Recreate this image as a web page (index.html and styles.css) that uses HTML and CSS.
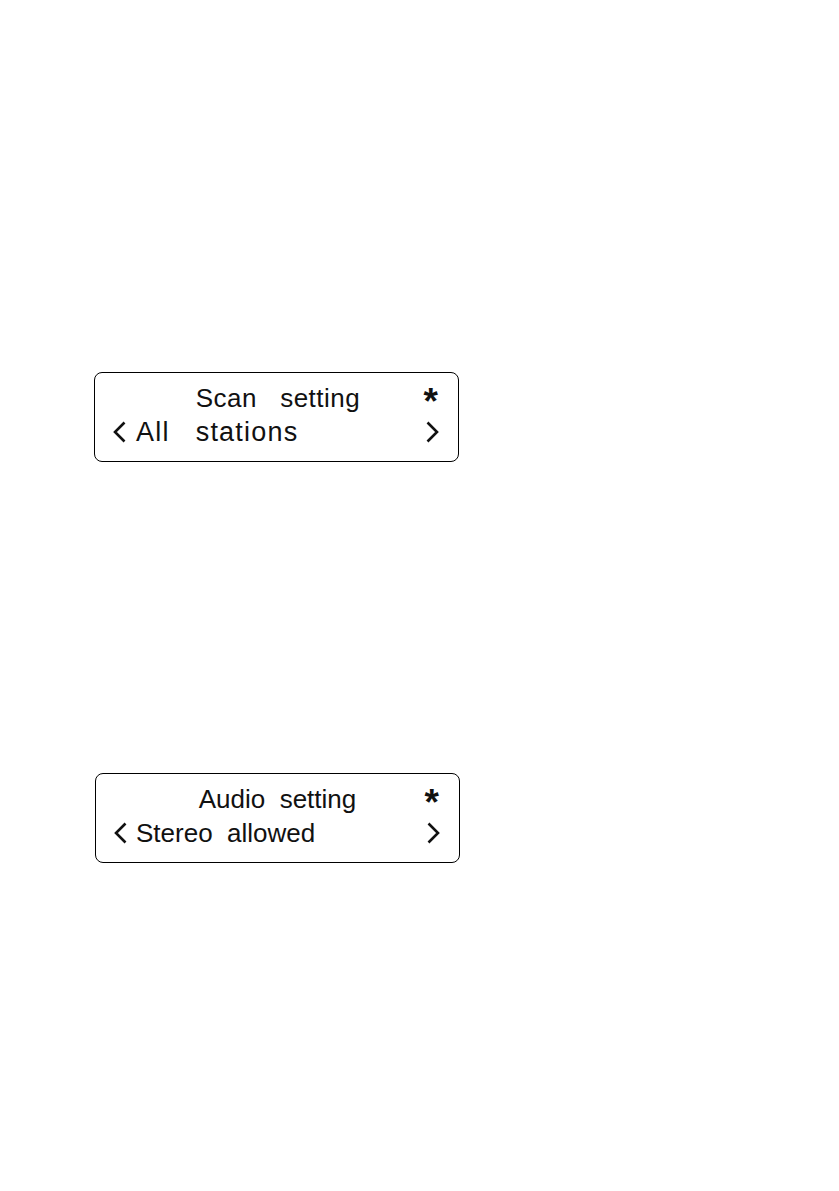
FILE: index.html
```html
<!DOCTYPE html>
<html>
<head>
  <title>Settings display</title>
  <link rel="stylesheet" href="styles.css">
</head>
<body>
  <div class="page">
    <div class="lcd">
      <div class="lcd-title">
        <span></span>
        <span class="title-text wide">Scan   setting</span>
        <span class="star">*</span>
      </div>
      <div class="lcd-option">
        <svg class="chev" viewBox="0 0 13 22"><path d="M11.5 1.5 L2 11 L11.5 20.5"/></svg>
        <span class="option-text wide">All   stations</span>
        <svg class="chev" viewBox="0 0 13 22"><path d="M1.5 1.5 L11 11 L1.5 20.5"/></svg>
      </div>
    </div>

    <div class="lcd second">
      <div class="lcd-title">
        <span></span>
        <span class="title-text">Audio  setting</span>
        <span class="star">*</span>
      </div>
      <div class="lcd-option">
        <svg class="chev" viewBox="0 0 13 22"><path d="M11.5 1.5 L2 11 L11.5 20.5"/></svg>
        <span class="option-text">Stereo  allowed</span>
        <svg class="chev" viewBox="0 0 13 22"><path d="M1.5 1.5 L11 11 L1.5 20.5"/></svg>
      </div>
    </div>
  </div>
</body>
</html>
```

FILE: styles.css
```css
body {
  margin: 0;
  background: #fff;
  font-family: "Liberation Sans", Arial, sans-serif;
  color: #111;
}

.page {
  padding: 372px 0 0 94px;
  display: flex;
  flex-direction: column;
  gap: 311px;
}

.lcd {
  width: 365px;
  box-sizing: border-box;
  border: 1px solid #000;
  border-radius: 8px;
  padding: 6px 18px 14px 18px;
  display: flex;
  flex-direction: column;
  gap: 8px;
}

.second {
  margin-left: 1px;
}

.lcd-title {
  display: grid;
  grid-template-columns: 1fr auto 1fr;
  align-items: center;
  height: 30px;
}

.title-text {
  font-size: 26px;
  line-height: 30px;
  white-space: pre;
}

.title-text.wide {
  letter-spacing: 0.5px;
  margin-left: 3px;
}

.star {
  justify-self: end;
  font-weight: bold;
  font-size: 37px;
  line-height: 30px;
  height: 30px;
  padding-top: 8px;
  margin-right: 2px;
}

.lcd-option {
  display: flex;
  align-items: center;
  height: 30px;
}

.option-text {
  flex: 1;
  font-size: 26px;
  line-height: 30px;
  white-space: pre;
  margin-left: 8px;
}

.option-text.wide {
  font-size: 27px;
  letter-spacing: 1.2px;
  margin-left: 9px;
}

.chev {
  width: 13px;
  height: 22px;
  fill: none;
  stroke: #111;
  stroke-width: 2.6;
  margin-right: 1px;
}
```
